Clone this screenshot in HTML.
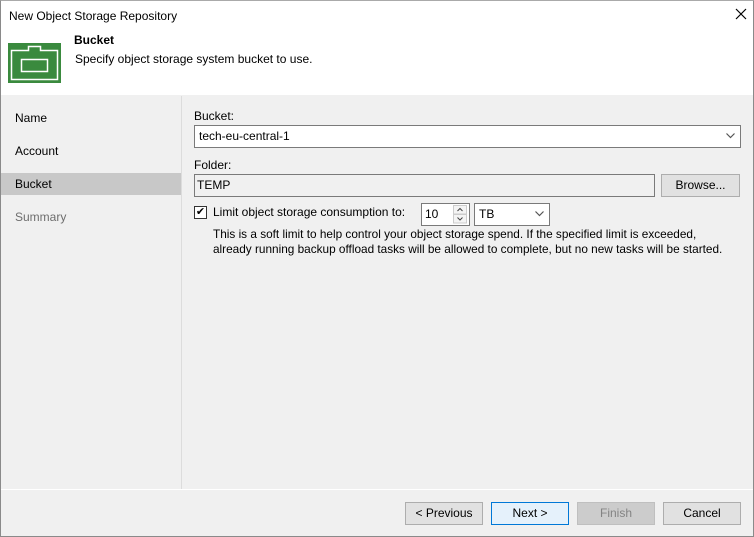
<html><head><style>
body{margin:0;width:754px;height:537px;overflow:hidden;font-family:"Liberation Sans",sans-serif;font-size:12px;color:#000}
.win{position:absolute;left:0;top:0;width:752px;height:535px;border:1px solid #8a8a8a;border-top:1px solid #aaa;background:#f0f0f0}
.hdr{position:absolute;left:0;top:0;width:752px;height:94px;background:#fff}
.a{position:absolute}
.btn{position:absolute;height:21px;border:1px solid #adadad;background:#e1e1e1;text-align:center;line-height:21px;box-sizing:content-box}
.chev{position:absolute;right:5px;top:7px}
</style></head><body><div class="win">
<div class="hdr">
<div class="a" style="left:8px;top:8px">New Object Storage Repository</div>
<svg class="a" style="left:734px;top:7px" width="12" height="12"><path d="M1 1L11 11M11 1L1 11" stroke="#000" stroke-width="1.2"/></svg>
<svg class="a" style="left:7px;top:42px" width="53" height="40"><rect width="53" height="40" fill="#3a8a3e"/><path d="M3.5 7.5H20.5V3.5H32.5V7.5H49.5V36.5H3.5Z" fill="none" stroke="#fff" stroke-width="1.5"/><rect x="13.5" y="16.5" width="26" height="12" fill="none" stroke="#fff" stroke-width="1.5"/></svg>
<div class="a" style="left:73px;top:32px;font-weight:bold">Bucket</div>
<div class="a" style="left:74px;top:51px">Specify object storage system bucket to use.</div>
</div>
<div class="a" style="left:180px;top:95px;width:1px;height:394px;background:#dcdcdc"></div>
<div class="a" style="left:0;top:488px;width:752px;height:1px;background:#fff"></div>
<div class="a" style="left:14px;top:110px">Name</div>
<div class="a" style="left:14px;top:143px">Account</div>
<div class="a" style="left:0;top:172px;width:180px;height:22px;background:#c8c8c8"></div>
<div class="a" style="left:14px;top:176px">Bucket</div>
<div class="a" style="left:14px;top:209px;color:#6d6d6d">Summary</div>
<div class="a" style="left:193px;top:108px">Bucket:</div>
<div class="a" style="left:193px;top:124px;width:545px;height:21px;background:#fff;border:1px solid #7a7a7a"><span style="position:absolute;left:4px;top:3px">tech-eu-central-1</span><svg class="chev" width="9" height="6"><path d="M0.5 0.5L4.5 4.5L8.5 0.5" fill="none" stroke="#555" stroke-width="1.2"/></svg></div>
<div class="a" style="left:193px;top:157px">Folder:</div>
<div class="a" style="left:193px;top:173px;width:459px;height:21px;background:#f0f0f0;border:1px solid #7a7a7a"><span style="position:absolute;left:2px;top:3px">TEMP</span></div>
<div class="btn" style="left:660px;top:173px;width:77px">Browse...</div>
<div class="a" style="left:193px;top:205px;width:11px;height:11px;border:1px solid #333;background:#fff;font-size:11px;line-height:11px;text-align:center">✔</div>
<div class="a" style="left:212px;top:204px">Limit object storage consumption to:</div>
<div class="a" style="left:420px;top:202px;width:47px;height:21px;background:#fff;border:1px solid #7a7a7a"><span style="position:absolute;left:3px;top:3px">10</span><svg style="position:absolute;left:31px;top:1px" width="14" height="19"><rect x="0.5" y="0.5" width="13" height="8.5" fill="#f4f4f4" stroke="#ccc"/><rect x="0.5" y="9.5" width="13" height="8.5" fill="#f4f4f4" stroke="#ccc"/><path d="M4.5 6L7 3.5L9.5 6M4.5 12.5L7 15L9.5 12.5" fill="none" stroke="#444"/></svg></div>
<div class="a" style="left:473px;top:202px;width:74px;height:21px;background:#fff;border:1px solid #7a7a7a"><span style="position:absolute;left:4px;top:3px">TB</span><svg class="chev" width="9" height="6"><path d="M0.5 0.5L4.5 4.5L8.5 0.5" fill="none" stroke="#555" stroke-width="1.2"/></svg></div>
<div class="a" style="left:212px;top:226px;line-height:15px;font-size:11.8px">This is a soft limit to help control your object storage spend. If the specified limit is exceeded,<br>already running backup offload tasks will be allowed to complete, but no new tasks will be started.</div>
<div class="btn" style="left:404px;top:501px;width:76px">&lt; Previous</div>
<div class="btn" style="left:490px;top:501px;width:76px;border-color:#0078d7;background:#e5f1fb">Next &gt;</div>
<div class="btn" style="left:576px;top:501px;width:76px;background:#cccccc;border-color:#bfbfbf;color:#838383">Finish</div>
<div class="btn" style="left:662px;top:501px;width:76px">Cancel</div>
</div></body></html>
